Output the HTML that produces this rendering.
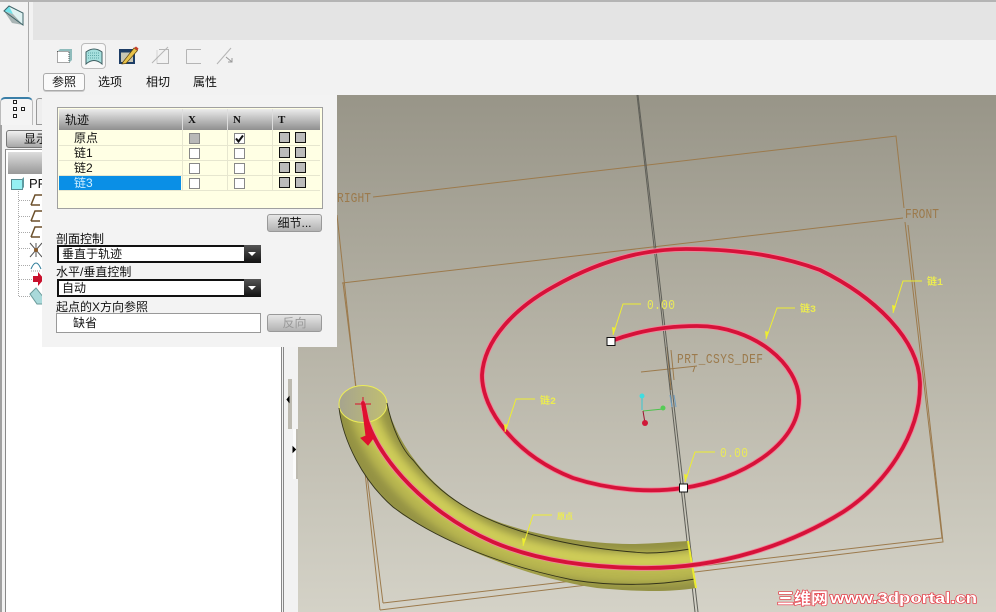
<!DOCTYPE html>
<html lang="zh"><head><meta charset="utf-8"><title>Sweep</title>
<style>
html,body{margin:0;padding:0;width:996px;height:612px;overflow:hidden;background:#f2f2f2}
body{position:relative;font:12px/14px "Liberation Sans","Noto Sans CJK SC",sans-serif;color:#111}
.a{position:absolute;box-sizing:border-box}
.t{position:absolute;white-space:nowrap;line-height:14px;font-size:12px}
.btn{background:linear-gradient(#e6e6e6,#b2b2b2);border:1px solid #999;border-radius:3px;text-align:center;white-space:nowrap}
.cb{position:absolute;width:11px;height:11px;background:#fff;border:1px solid #888;box-sizing:border-box}
.sq{position:absolute;width:11px;height:11px;background:#bbb;border:1px solid #111;box-sizing:border-box}
.combo{position:absolute;left:57px;width:204px;height:18px;background:#fff;border:2px solid #111;box-sizing:border-box}
.dd{position:absolute;right:-2px;top:-2px;width:17px;height:18px;background:linear-gradient(#555,#111)}
.dd:after{content:"";position:absolute;left:4px;top:7px;border-left:4px solid transparent;border-right:4px solid transparent;border-top:4px solid #fff}
.rl{position:absolute;left:59px;width:261px;height:1px;background:#e6e6cf}
svg text{font-family:"Liberation Mono","Noto Sans CJK SC",monospace}
</style></head><body>

<div class="a" style="left:0;top:0;width:996px;height:2px;background:#b4b4b4"></div>
<div class="a" style="left:33px;top:2px;width:963px;height:38px;background:#e4e4e4"></div>
<div class="a" style="left:28px;top:2px;width:1px;height:90px;background:#aaa"></div>

<!-- viewport -->
<div class="a" style="left:298px;top:95px;width:698px;height:517px;background:linear-gradient(#989588,#b9b6a9 52%,#d4d2c7)"></div>
<svg class="a" style="left:0;top:0" width="996" height="612" viewBox="0 0 996 612">
<defs>
<clipPath id="tb"><path d="M339,408L363,395L387,403C395,440 425,480 460,503C500,530 570,543 630,544C650,544 670,542 688,541L696,588C670,592 640,592 597,588C530,578 460,550 403,515C370,490 345,450 339,408Z"/></clipPath>
<linearGradient id="el" x1="0" x2="1" y1="0" y2="0"><stop offset="0" stop-color="#a6a48e"/><stop offset="1" stop-color="#c0be72"/></linearGradient>
<filter id="bl" x="-10%" y="-10%" width="120%" height="120%"><feGaussianBlur stdDeviation="4"/></filter>
</defs>
<!-- datum planes -->
<g fill="none" stroke="#9c7a4c" stroke-width="1">
<path d="M373,197L896,136L904,208"/>
<path d="M342,283L903,218"/>
<path d="M337,215L380,610"/>
<path d="M343,283L383,603"/>
<path d="M383,603L942,538L905,222"/>
<path d="M380,610L943,542L908,225"/>
<path d="M641,372L697,366M695,366L693,372"/>
<path d="M667,347L671,390M671,350L674,380"/>
</g>
<!-- axis -->
<g fill="none" stroke="#5f5f58" stroke-width="1">
<path d="M637,95L695,612"/>
<path d="M638,95L698,612"/>
</g>
<path d="M670,395L672,407M674,395L676,407" stroke="#6d9ec4" stroke-width="1" fill="none"/>
<!-- tube -->
<g clip-path="url(#tb)" fill="none">
<path fill="#949244" d="M330,380H700V600H330Z"/>
<g filter="url(#bl)">
<path stroke="#b8b650" stroke-width="30" d="M358,375L363,403C368,448 420,510 493,542C540,562 595,568 647,568C670,568 700,565 730,558"/>
<path stroke="#cfcd58" stroke-width="14" d="M360,375L366,403C371,446 423,506 496,537C543,556 598,561 650,561C672,561 700,559 730,552"/>
</g>
</g>
<ellipse cx="363" cy="404" rx="24" ry="18.500" fill="url(#el)" stroke="#ecec58" stroke-width="1"/>
<g fill="none" stroke="#33331a" stroke-width=".9">
<path d="M339,408C343,440 362,480 393,507C430,535 490,563 573,580C610,586 655,586 695,579"/>
<path d="M387,403C392,428 402,450 413,460C430,482 450,500 480,515C520,535 580,549 647,553C662,553 678,551 690,549"/>
</g>
<path d="M688,541L696,588" stroke="#ecec30" stroke-width="2" fill="none"/>

<!-- red trajectories -->
<g fill="none" stroke-linecap="round">
<g stroke="#f2849a" stroke-width="5.600">
<path d="M363,403C368,448 420,510 493,542C540,562 595,568 647,568C720,568 790,545 843,512C885,485 920,435 920,385C920,340 875,297 820,270C780,255 735,249 686,249C640,249 595,263 553,287C515,308 484,340 482,375C482,410 515,455 573,478C610,490 650,493 683,488"/>
<path d="M683,488C740,480 799,445 799,400C799,365 755,326 697,326C665,326 635,332 611,341"/>
</g>
<g stroke="#d61239" stroke-width="3.800">
<path d="M363,403C368,448 420,510 493,542C540,562 595,568 647,568C720,568 790,545 843,512C885,485 920,435 920,385C920,340 875,297 820,270C780,255 735,249 686,249C640,249 595,263 553,287C515,308 484,340 482,375C482,410 515,455 573,478C610,490 650,493 683,488"/>
<path d="M683,488C740,480 799,445 799,400C799,365 755,326 697,326C665,326 635,332 611,341"/>
</g>
</g>
<!-- start arrow -->
<path d="M362,404L365,404L371,433L374,437L368,445L361,438L366,436Z" fill="#e0102f" stroke="#e0102f"/>
<path d="M355,404H371M363,397V410" stroke="#d8102c" stroke-width="1" fill="none"/>

<!-- triad -->
<path d="M642,396V410" stroke="#39c7d3" fill="none"/>
<path d="M643,411L663,409" stroke="#4cc24c" fill="none"/>
<path d="M643,411L645,423" stroke="#a01030" fill="none"/>
<circle cx="642" cy="396" r="2.500" fill="#3fdde0"/><circle cx="663" cy="408" r="2.500" fill="#55cc55"/><circle cx="645" cy="423" r="3" fill="#d01838"/>

<!-- squares -->
<rect x="607" y="337.500" width="8" height="8" fill="#fff" stroke="#111"/>
<rect x="679.500" y="484" width="8" height="8" fill="#fff" stroke="#111"/>

<!-- leaders -->
<g fill="none" stroke="#eeee30" stroke-width="1">
<path d="M641,304H623L613,335"/>
<path d="M715,452H695L685,482"/>
<path d="M795,308H777L766,339"/>
<path d="M922,281H903L893,313"/>
<path d="M535,399H516L505,432"/>
<path d="M552,515H533L523,546"/>
</g>
<g fill="#eeee30">
<path d="M613,335L612,327L616,328Z"/><path d="M685,482L684,474L688,475Z"/><path d="M766,339L765,331L769,332Z"/><path d="M893,313L892,305L896,306Z"/><path d="M505,432L504,424L508,425Z"/><path d="M523,546L522,538L526,539Z"/>
</g>
<g fill="#e9e95a" font-size="14">
<text transform="translate(647,309) scale(.8,1)" textLength="35">0.00</text>
<text transform="translate(720,457) scale(.8,1)" textLength="35">0.00</text>
</g>
<g fill="#ecec50" font-size="10" font-weight="bold">
<text x="800" y="312">链3</text>
<text x="927" y="285">链1</text>
<text x="540" y="404">链2</text>
<text x="557" y="519" font-size="8">原点</text>
</g>
<g fill="#9c7a4c" font-size="14">
<text transform="translate(677,363) scale(.8,1)" textLength="107.500">PRT_CSYS_DEF</text>
<text transform="translate(337,202) scale(.8,1)" textLength="42.500">RIGHT</text>
<text transform="translate(905,218) scale(.8,1)" textLength="42.500">FRONT</text>
</g>
<!-- watermark -->
<g fill="#fff" stroke="#e8323f" stroke-width="1.300" paint-order="stroke">
<text x="777" y="604" font-size="16" font-weight="bold" textLength="51" lengthAdjust="spacingAndGlyphs" style='font-family:"Noto Sans CJK SC",sans-serif'>三维网</text>
<text x="830" y="603" font-size="15" font-weight="bold" textLength="147" lengthAdjust="spacingAndGlyphs" style='font-family:"Liberation Sans",sans-serif'>www.3dportal.cn</text>
</g>
</svg>

<!-- gutter between tree and viewport -->
<div class="a" style="left:284px;top:95px;width:14px;height:517px;background:#f2f2f2"></div>
<div class="a" style="left:288px;top:379px;width:4px;height:50px;background:#bdbab0"></div>
<div class="a" style="left:293px;top:429px;width:5px;height:50px;background:#fbfbfb;border-right:2px solid #bdbab0"></div>
<svg class="a" style="left:284px;top:395px" width="14" height="70"><path d="M5,2L3,4.500L5,7Z" stroke="#000" fill="#000"/><path d="M9,52L11.500,54.500L9,57Z" stroke="#000" fill="#000"/></svg>

<!-- left tree panel -->
<div class="a" style="left:0;top:125px;width:2px;height:487px;background:#a0a0a0"></div>
<div class="a" style="left:5px;top:149px;width:277px;height:463px;background:#fff;border-left:1px solid #888;border-right:1px solid #888;border-top:1px solid #999"></div>
<div class="a" style="left:283px;top:347px;width:1px;height:265px;background:#888"></div>
<div class="a" style="left:8px;top:152px;width:36px;height:22px;background:linear-gradient(#ddd,#999)"></div>
<div class="a" style="left:0;top:97px;width:33px;height:28px;background:#f4f4f4;border:1px solid #bbb;border-top:2px solid #3a7fa8;border-bottom:none;border-radius:5px 5px 0 0"></div>
<div class="a" style="left:36px;top:98px;width:8px;height:27px;background:#eee;border:1px solid #999;border-radius:3px 3px 0 0"></div>
<div class="a btn" style="left:6px;top:130px;width:44px;height:18px;text-align:left;padding-left:17px;line-height:16px;border-color:#777;background:linear-gradient(#f0f0f0,#a8a8a8)">显示</div>
<svg class="a" style="left:0;top:95px" width="44" height="220">
<g fill="#fff" stroke="#222" stroke-width="1"><rect x="13.500" y="5.500" width="3" height="3"/><rect x="13.500" y="12.500" width="3" height="3"/><rect x="13.500" y="19.500" width="3" height="3"/><rect x="21.500" y="12.500" width="3" height="3"/></g>
<rect x="11.500" y="84.500" width="11" height="10" fill="#95f0f2" stroke="#5a8a90"/>
<path d="M22,84L24,82V92L22,95Z" fill="#5e9aa0"/>
<g fill="none" stroke="#aaa" stroke-dasharray="1 1"><path d="M18.500,96V202"/><path d="M19,105.500H30M19,121.500H30M19,137.500H30M19,153.500H30M19,170.500H30M19,184.500H32M19,201.500H30"/></g>
<g fill="none" stroke="#6b4f2a" stroke-width="1.500"><path d="M31,110L35,100H44M31,110H40"/><path d="M31,126L35,116H44M31,126H40"/><path d="M31,142L35,132H44M31,142H40"/></g>
<path d="M30,148L42,162M30,162L42,148M36,148V162" stroke="#555" fill="none"/><circle cx="36" cy="155" r="2" fill="#8a5a2a"/>
<path d="M31,174Q36,162 41,174" stroke="#2f7d9a" fill="none"/><path d="M31,176H41" stroke="#999" stroke-dasharray="1 1" fill="none"/>
<path d="M33,181H38V177L44,184L38,191V187H33Z" fill="#c8102c"/>
<path d="M30,199L36,193L44,203V209H37Z" fill="#a9d9da" stroke="#6a9a9a"/>
</svg>
<div class="t" style="left:29px;top:177px;font-size:13px;width:13px;overflow:hidden">PF</div>

<!-- dialog -->
<div class="a" style="left:42px;top:95px;width:295px;height:252px;background:#f3f3f3"></div>
<div class="a" style="left:57px;top:107px;width:266px;height:102px;background:#ffffe4;border:1px solid #a0a0a0"></div>
<div class="a" style="left:59px;top:109px;width:261px;height:21px;background:linear-gradient(#ececec,#8f8f8f)"></div>
<div class="a" style="left:182px;top:109px;width:1px;height:21px;background:#ddd"></div>
<div class="a" style="left:227px;top:109px;width:1px;height:21px;background:#ddd"></div>
<div class="a" style="left:272px;top:109px;width:1px;height:21px;background:#ddd"></div>
<div class="t" style="left:65px;top:113px">轨迹</div>
<div class="t" style="left:188px;top:113px;font-family:'Liberation Serif',serif;font-weight:bold;font-size:11px">X</div>
<div class="t" style="left:233px;top:113px;font-family:'Liberation Serif',serif;font-weight:bold;font-size:11px">N</div>
<div class="t" style="left:278px;top:113px;font-family:'Liberation Serif',serif;font-weight:bold;font-size:11px">T</div>
<div class="rl" style="top:145px"></div><div class="rl" style="top:160px"></div><div class="rl" style="top:175px"></div><div class="rl" style="top:190px"></div>
<div class="a" style="left:182px;top:130px;width:1px;height:60px;background:#e6e6cf"></div>
<div class="a" style="left:227px;top:130px;width:1px;height:60px;background:#e6e6cf"></div>
<div class="a" style="left:272px;top:130px;width:1px;height:60px;background:#e6e6cf"></div>
<div class="a" style="left:59px;top:176px;width:122px;height:14px;background:#0a8fe6"></div>
<div class="t" style="left:74px;top:131px">原点</div>
<div class="t" style="left:74px;top:146px">链1</div>
<div class="t" style="left:74px;top:161px">链2</div>
<div class="t" style="left:74px;top:176px;color:#cfeeff">链3</div>

<div class="cb" style="left:189px;top:133px;background:#b8b8b8"></div>
<div class="cb" style="left:189px;top:148px"></div><div class="cb" style="left:189px;top:163px"></div><div class="cb" style="left:189px;top:178px"></div>
<div class="cb" style="left:234px;top:133px"></div>
<div class="cb" style="left:234px;top:148px"></div><div class="cb" style="left:234px;top:163px"></div><div class="cb" style="left:234px;top:178px"></div>
<svg class="a" style="left:234px;top:133px" width="11" height="11"><path d="M2,5.500L4.500,8.500L9,2.500" fill="none" stroke="#111" stroke-width="2"/></svg>
<div class="sq" style="left:279px;top:132px"></div><div class="sq" style="left:295px;top:132px"></div>
<div class="sq" style="left:279px;top:147px"></div><div class="sq" style="left:295px;top:147px"></div>
<div class="sq" style="left:279px;top:162px"></div><div class="sq" style="left:295px;top:162px"></div>
<div class="sq" style="left:279px;top:177px"></div><div class="sq" style="left:295px;top:177px"></div>

<div class="a btn" style="left:267px;top:214px;width:55px;height:18px;line-height:16px">细节...</div>
<div class="t" style="left:56px;top:232px">剖面控制</div>
<div class="combo" style="top:245px"><div class="t" style="left:3px;top:0">垂直于轨迹</div><div class="dd"></div></div>
<div class="t" style="left:56px;top:265px">水平/垂直控制</div>
<div class="combo" style="top:279px"><div class="t" style="left:3px;top:0">自动</div><div class="dd"></div></div>
<div class="t" style="left:56px;top:300px">起点的X方向参照</div>
<div class="a" style="left:56px;top:313px;width:205px;height:20px;background:#fff;border:1px solid #999"></div>
<div class="t" style="left:73px;top:316px">缺省</div>
<div class="a btn" style="left:267px;top:314px;width:55px;height:18px;line-height:16px;color:#999">反向</div>

<!-- dashboard tool icons -->
<div class="a" style="left:81px;top:43px;width:25px;height:26px;background:#f8f8f8;border:1px solid #bbb;border-radius:4px"></div>
<div class="a" style="left:43px;top:73px;width:42px;height:18px;background:#fafafa;border:1px solid #aaa;border-radius:3px;box-shadow:0 1px 0 #ccc"></div>
<div class="t" style="left:52px;top:75px">参照</div>
<div class="t" style="left:98px;top:75px">选项</div>
<div class="t" style="left:146px;top:75px">相切</div>
<div class="t" style="left:193px;top:75px">属性</div>
<svg class="a" style="left:0;top:0" width="240" height="72">
<!-- top-left icon -->
<path d="M4,11L9,6L23,13V25Z" fill="#dff2f2"/>
<path d="M4,11L12,23L23,25L13,14Z" fill="#a8b4b4"/>
<path d="M4,11L9,6L13,14Z" fill="#6fe3ea"/>
<path d="M9,6L23,13V25L4,11Z" fill="none" stroke="#3f6468"/>
<!-- solid -->
<path d="M60,49H72V60L69,63V51H58Z" fill="#8fbcbc"/>
<rect x="57.500" y="51.500" width="11.500" height="11" fill="#fff" stroke="#555" stroke-dasharray="1 1"/>
<!-- surface -->
<path d="M86,64V52Q94,46 102,52V64Q94,57 86,64Z" fill="#a6e0de" stroke="#3f5f62"/>
<path d="M88,53H100M88,55.500H100M88,58H100" stroke="#5fa8a8" stroke-dasharray="1 1" fill="none"/>
<!-- pencil -->
<rect x="120" y="50" width="14" height="13" fill="#c9c7b4" stroke="#1d3d66" stroke-width="2"/>
<rect x="120" y="50" width="14" height="2.500" fill="#1d3d66"/>
<path d="M123,62L134,48L137.500,50.500L126,63.500L122,64Z" fill="#e8c24a" stroke="#5a4310" stroke-width=".7"/>
<path d="M134,48L136,46.500L138.500,48.500L137.500,50.500Z" fill="#c8402c"/>
<!-- disabled tools -->
<g fill="none" stroke="#b5b5b5">
<path d="M159,49.500H168.500V63.500H157" />
<path d="M157,63.500V50" stroke-dasharray="1 1"/>
<path d="M152,63L168,47"/>
<path d="M186.500,49.500H201M186.500,49.500V63.500H201"/>
<path d="M217,64L231,48"/>
<path d="M226,57L232,62M232,58V62H228" stroke="#999"/>
</g>
</svg>
</body></html>
